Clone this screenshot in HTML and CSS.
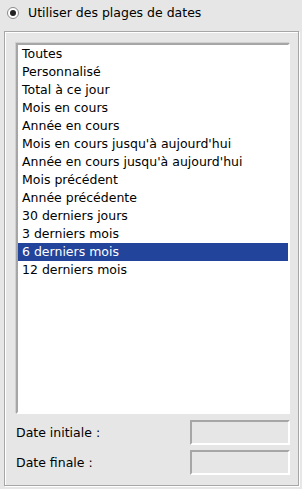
FILE: index.html
```html
<!DOCTYPE html>
<html lang="fr">
<head>
<meta charset="utf-8">
<link rel="stylesheet" href="styles.css">
</head>
<body>
<div class="radio-row">
  <span class="radio"><span class="dot"></span></span>
  <span class="radio-label">Utiliser des plages de dates</span>
</div>
<div class="group">
  <ul class="list">
    <li>Toutes</li>
    <li>Personnalisé</li>
    <li>Total à ce jour</li>
    <li>Mois en cours</li>
    <li>Année en cours</li>
    <li>Mois en cours jusqu'à aujourd'hui</li>
    <li>Année en cours jusqu'à aujourd'hui</li>
    <li>Mois précédent</li>
    <li>Année précédente</li>
    <li>30 derniers jours</li>
    <li>3 derniers mois</li>
    <li class="selected">6 derniers mois</li>
    <li>12 derniers mois</li>
  </ul>
  <div class="form">
    <span class="label">Date initiale :</span>
    <span class="field"></span>
    <span class="label">Date finale :</span>
    <span class="field"></span>
  </div>
</div>
</body>
</html>
```

FILE: styles.css
```css
html, body {
  margin: 0;
  padding: 0;
  background: #e6e6e6;
  font-family: "DejaVu Sans", sans-serif;
  font-size: 12.5px;
  color: #000;
}
body {
  width: 302px;
  height: 489px;
  overflow: hidden;
}
.radio-row {
  display: flex;
  align-items: center;
  height: 26px;
  padding-left: 7px;
}
.radio {
  box-sizing: border-box;
  width: 12px;
  height: 12px;
  border-radius: 50%;
  border: 1px solid #8a8a8a;
  background: #fff;
  display: flex;
  align-items: center;
  justify-content: center;
  margin-right: 9px;
}
.dot {
  width: 6px;
  height: 6px;
  border-radius: 50%;
  background: #222;
}
.radio-label {
  line-height: 16px;
}
.group {
  box-sizing: border-box;
  margin: 5px 0 0 4px;
  width: 295px;
  height: 455px;
  border: 1px solid #a6a6a6;
  box-shadow: inset 1px 1px 0 #fff, 1px 1px 0 #fff;
  padding: 11px 8px 0 11px;
}
.list {
  box-sizing: border-box;
  list-style: none;
  margin: 0;
  padding: 0;
  height: 371px;
  background: #fff;
  border-top: 2px solid #a6a6a6;
  border-left: 2px solid #a6a6a6;
  border-right: 2px solid #fff;
  border-bottom: 2px solid #fff;
  box-shadow: -1px -1px 0 #d0d0d0;
}
.list li {
  height: 18px;
  line-height: 18px;
  padding-left: 4px;
  white-space: nowrap;
}
.list li.selected {
  background: #22449b;
  color: #fff;
}
.form {
  display: grid;
  grid-template-columns: 1fr 100px;
  row-gap: 5px;
  align-items: center;
  margin-top: 6px;
}
.label {
  line-height: 25px;
}
.field {
  box-sizing: border-box;
  height: 25px;
  border-top: 2px solid #a6a6a6;
  border-left: 2px solid #a6a6a6;
  border-right: 2px solid #fff;
  border-bottom: 2px solid #fff;
}
```
